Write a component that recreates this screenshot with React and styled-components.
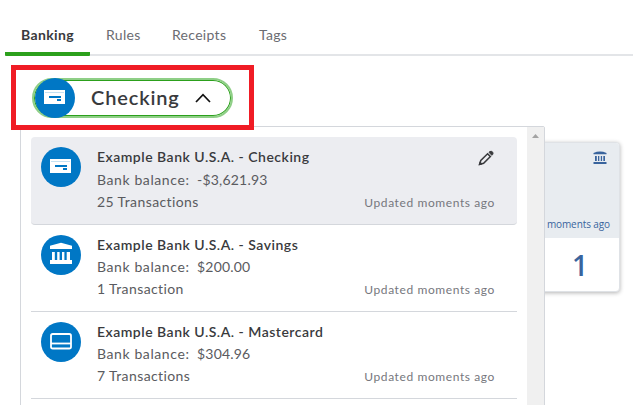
import React from 'react'
import styled, { createGlobalStyle } from 'styled-components'

const GlobalStyle = createGlobalStyle`
    * {
        box-sizing: border-box;
    }

    body {
        margin: 0;
        background: #fff;
        color: #393a3d;
        font-family: Lato, 'Liberation Sans', sans-serif;
        overflow: hidden;
    }
`;

const Page = styled.div`
    position: relative;
    width: 633px;
    height: 405px;
    overflow: hidden;
`;

const TabBar = styled.nav`
    display: flex;
    height: 56px;
    margin-left: 5px;
    padding-top: 14px;
    border-bottom: 2px solid #e3e5e8;
`;

const Tab = styled.a`
    height: 42px;
    padding: 0 16px;
    line-height: 42px;
    font-size: 14px;
    white-space: nowrap;
    width: ${props => props.$width}px;
    letter-spacing: ${props => props.$active ? 0.35 : 0.3}px;
    color: ${props => props.$active ? '#393a3d' : '#6b6c72'};
    font-weight: ${props => props.$active ? 700 : 400};
    border-bottom: ${props => props.$active ? '4px solid #2ca01c' : '0'};
    border-radius: 1px;
`;

const Highlight = styled.div`
    position: relative;
    z-index: 3;
    width: 243px;
    height: 65px;
    margin: 9px 0 0 11px;
    padding: 8px 16px;
    border: 5px solid #f01c25;
`;

const AccountButton = styled.button`
    display: flex;
    align-items: center;
    width: 201px;
    height: 40px;
    padding: 0;
    border: 2px solid #8fcf87;
    border-radius: 20px;
    background: #fff;
    box-shadow: inset 0 0 0 1px #2ca01c;
    color: #393a3d;
    font-family: inherit;
`;

const AccountName = styled.span`
    width: 104px;
    margin-left: 16px;
    text-align: left;
    font-size: 20px;
    line-height: 35px;
    height: 36px;
    font-weight: 600;
    letter-spacing: 0.85px;
`;

const Circle = styled.span`
    display: flex;
    flex: none;
    width: 40px;
    height: 40px;
    margin-left: ${props => props.$inset || 0}px;
    border-radius: 50%;
    background: #0077c5;
`;

const Menu = styled.div`
    position: absolute;
    z-index: 2;
    top: 126px;
    left: 20px;
    display: flex;
    width: 525px;
    height: 300px;
    border: 1px solid #d4d7dc;
    border-radius: 2px;
    background: #fff;
`;

const AccountList = styled.ul`
    flex: 1;
    margin: 0;
    padding: 10px 10px 0;
    list-style: none;
`;

const Account = styled.li`
    display: flex;
    height: ${props => props.$selected ? 88 : 87}px;
    padding: 10px 22px 0 10px;
    border-bottom: 1px solid #d4d7dc;
    border-radius: ${props => props.$selected ? '4px' : '0'};
    background: ${props => props.$selected ? '#ecedf1' : '#fff'};
`;

const Details = styled.div`
    flex: 1;
    margin: -1px 0 0 16px;
    white-space: nowrap;
`;

const Title = styled.div`
    height: 22px;
    margin-bottom: ${props => props.$selected ? 1 : 0}px;
    line-height: 21px;
    font-size: 14px;
    font-weight: 600;
    letter-spacing: 0.5px;
`;

const Line = styled.div`
    display: flex;
    height: 22px;
    line-height: 22px;
    font-size: 14px;
    letter-spacing: 0.4px;
    color: #5a5b60;
`;

const Label = styled.span`
    width: 100px;
    letter-spacing: 0.6px;
`;

const Amount = styled.span`
    letter-spacing: 0.2px;
`;

const Side = styled.div`
    display: flex;
    flex-direction: column;
    align-items: flex-end;
    justify-content: space-between;
    height: ${props => props.$selected ? 66 : 65}px;

    svg {
        margin: 3px 1px 0 0;
    }
`;

const Updated = styled.span`
    margin-top: auto;
    line-height: 20px;
    font-size: 12px;
    letter-spacing: 0.6px;
    white-space: nowrap;
    color: #76777d;
`;

const Scrollbar = styled.div`
    width: 17px;
    background: #f0f0f0;
`;

const Card = styled.div`
    position: absolute;
    z-index: 1;
    top: 142px;
    left: 420px;
    width: 200px;
    height: 150px;
    border: 1px solid #dfe2e6;
    border-radius: 4px;
    background: #fff;
    box-shadow: 0 1px 4px rgba(0, 0, 0, 0.3);
    color: #39649d;
    overflow: hidden;
`;

const CardTop = styled.div`
    display: flex;
    flex-direction: column;
    align-items: flex-end;
    justify-content: space-between;
    height: 95px;
    padding: 8px 9px 6px;
    background: #e8ecf0;
    font-family: 'Open Sans', sans-serif;
    font-size: 10px;
    line-height: 16px;
    letter-spacing: -0.1px;

    svg {
        margin-right: 3px;
    }
`;

const Count = styled.div`
    padding-right: 31px;
    text-align: right;
    font: 600 28px/54px 'Open Sans', sans-serif;
`;

const CheckIcon = () => (
    <svg width="40" height="40" shapeRendering="crispEdges">
        <path fill="#fff" d="M9 12h21v14H9z"/>
        <path fill="#c5e1f2" d="M10 14h19v1H10z"/>
        <path fill="#0077c5" d="M14 18h12v2H14zM22 21h4v2h-4z"/>
    </svg>
)

const BankIcon = () => (
    <svg width="40" height="40" fill="#fff">
        <path d="M9 14v-3.2L20 7.8l11 3V14zM9 25h22v4H9z"/>
        <path d="M11 17h2.8v8H11zM16.2 17h2.4v8h-2.4zM21 17h2.4v8H21zM25.7 17H29v8h-3.3z"/>
    </svg>
)

const CardIcon = () => (
    <svg width="40" height="40" fill="none" stroke="#fff" strokeWidth="1.8">
        <rect x="10" y="12" width="20" height="14.5" rx="1.8"/>
        <path d="M10 21.5h20"/>
    </svg>
)

const PencilIcon = () => (
    <svg width="16" height="16" viewBox="0 0 16 16" fill="none" stroke="#393a3d" strokeWidth="1.5">
        <path d="M1.5 14.5 2.8 10.4 9.6 3.8 12.4 6.6 5.6 13.3z"/>
        <path fill="#393a3d" strokeWidth="1" d="m11 2.3.8-.7q1.5-.8 2.7.3 1 1.2.2 2.5l-.9.9zM1.3 14.7l.8-2.8 2 2z"/>
    </svg>
)

const SmallBankIcon = () => (
    <svg width="14" height="13" fill="#39649d">
        <path d="M.5 3.2V2Q7-.8 13.5 2v1.2zM.5 11h13v2H.5zM2 5h1.8v5H2zM5 5h1.3v5H5zM7.8 5h1.3v5H7.8zM10.3 5H12v5h-1.7z"/>
    </svg>
)

const icons = {
    check: <CheckIcon/>,
    bank: <BankIcon/>,
    card: <CardIcon/>
}

const accounts = [
    {name: 'Example Bank U.S.A. - Checking', balance: '-$3,621.93', count: '25 Transactions', icon: 'check', selected: true},
    {name: 'Example Bank U.S.A. - Savings', balance: '$200.00', count: '1 Transaction', icon: 'bank'},
    {name: 'Example Bank U.S.A. - Mastercard', balance: '$304.96', count: '7 Transactions', icon: 'card'}
]

const AccountItem = ({account}) => (
    <Account $selected={account.selected}>
        <Circle>{icons[account.icon]}</Circle>
        <Details>
            <Title $selected={account.selected}>{account.name}</Title>
            <Line><Label>Bank balance:</Label><Amount>{account.balance}</Amount></Line>
            <Line>{account.count}</Line>
        </Details>
        <Side $selected={account.selected}>
            {account.selected && <PencilIcon/>}
            <Updated>Updated moments ago</Updated>
        </Side>
    </Account>
)

const App = () => (
    <Page>
        <GlobalStyle/>
        <TabBar>
            <Tab $active $width={85}>Banking</Tab>
            <Tab $width={66}>Rules</Tab>
            <Tab $width={87}>Receipts</Tab>
            <Tab $width={60}>Tags</Tab>
        </TabBar>
        <Highlight>
            <AccountButton>
                <Circle $inset={1}><CheckIcon/></Circle>
                <AccountName>Checking</AccountName>
                <svg width="16" height="10" fill="none" stroke="#111" strokeWidth="1.7">
                    <path d="m1 9 7-7.3L15 9"/>
                </svg>
            </AccountButton>
        </Highlight>
        <Menu>
            <AccountList>
                {accounts.map(account => <AccountItem key={account.name} account={account}/>)}
            </AccountList>
            <Scrollbar>
                <svg width="17" height="17" fill="#a3a3a3">
                    <path d="m5 11 3.5-4 3.5 4z"/>
                </svg>
            </Scrollbar>
        </Menu>
        <Card>
            <CardTop>
                <SmallBankIcon/>
                <span>moments ago</span>
            </CardTop>
            <Count>1</Count>
        </Card>
    </Page>
)

export default App
